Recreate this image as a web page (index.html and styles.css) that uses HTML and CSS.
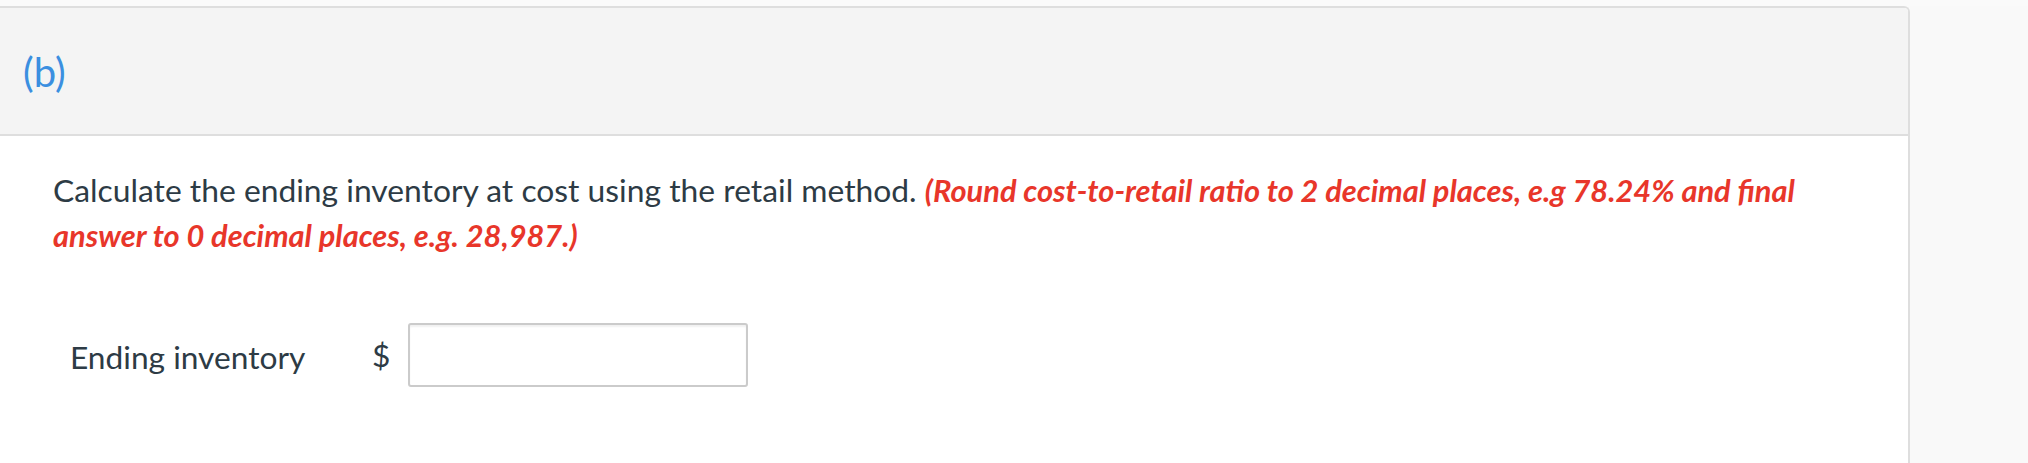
FILE: index.html
```html
<!DOCTYPE html>
<html lang="en">
<head>
<meta charset="utf-8">
<title>Part (b)</title>
<link rel="stylesheet" href="styles.css">
</head>
<body>
<div class="page">
  <section class="card">
    <header class="card-head"><span class="part">(b)</span></header>
    <div class="card-body">
      <p class="question">Calculate the ending inventory at cost using the retail method. <em class="hint">(Round cost-to-retail ratio to 2 decimal places, e.g 78.24% and final answer to 0 decimal places, e.g. 28,987.)</em></p>
      <div class="answer-row">
        <span class="label">Ending inventory</span>
        <span class="currency">$</span>
        <input class="answer-input" type="text" aria-label="Ending inventory">
      </div>
    </div>
  </section>
  <aside class="side"></aside>
</div>
</body>
</html>
```
FILE: styles.css
```css
html, body {
  margin: 0;
  padding: 0;
  height: 100%;
}
body {
  background: #fafafa;
  font-family: Lato, "Open Sans", "Liberation Sans", sans-serif;
  color: #2d3b45;
  overflow: hidden;
}
.page {
  display: flex;
  padding-top: 6px;
  height: 457px;
}
.card {
  width: 1910px;
  flex: 0 0 1910px;
  background: #ffffff;
  border: 2px solid #dedede;
  border-left: none;
  border-bottom: none;
  border-radius: 0 6px 0 0;
  box-sizing: border-box;
  display: flex;
  flex-direction: column;
}
.card-head {
  background: #f4f4f4;
  height: 128px;
  border-bottom: 2px solid #dedede;
  border-radius: 0 4px 0 0;
  display: flex;
  align-items: center;
  padding-left: 23px;
  padding-top: 2px;
  box-sizing: border-box;
}
.part {
  color: #3b8fe0;
  font-size: 40px;
  line-height: 1;
}
.card-body {
  background: #ffffff;
  padding: 0 40px 0 53px;
  flex: 1;
}
.question {
  margin: 32px 0 0 0;
  font-size: 31.8px;
  line-height: 44px;
  max-width: 1790px;
}
.hint {
  color: #e8362a;
  font-weight: 700;
  font-style: italic;
  font-size: 30.8px;
  font-variant-ligatures: common-ligatures;
}
.answer-row {
  display: flex;
  align-items: center;
  margin-top: 65px;
  padding-left: 17px;
  font-size: 31.7px;
}
.label {
  width: 302px;
  flex: 0 0 302px;
  position: relative;
  top: 2px;
}
.currency {
  margin-right: 18px;
}
.answer-input {
  width: 340px;
  height: 64px;
  box-sizing: border-box;
  border: 2px solid #cbcbcb;
  border-radius: 3px;
  box-shadow: inset 0 2px 2px rgba(0, 0, 0, 0.06);
  background: #ffffff;
  margin: 0;
  padding: 0 10px;
  font: inherit;
}
.side {
  flex: 1;
  background: #f9f9f9;
}
```
